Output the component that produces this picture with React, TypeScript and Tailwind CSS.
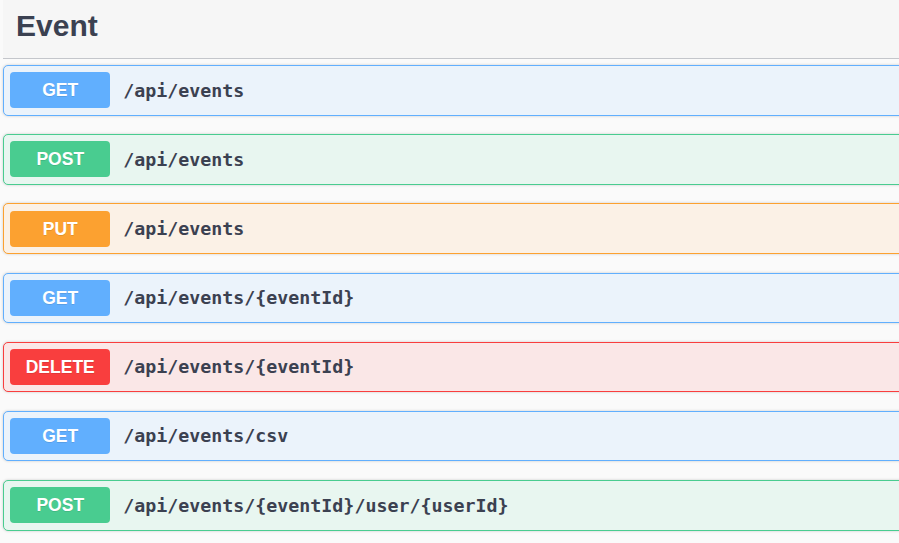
import React from "react";

type Op = { method: "GET" | "POST" | "PUT" | "DELETE"; path: string };

const ops: Op[] = [
  { method: "GET", path: "/api/events" },
  { method: "POST", path: "/api/events" },
  { method: "PUT", path: "/api/events" },
  { method: "GET", path: "/api/events/{eventId}" },
  { method: "DELETE", path: "/api/events/{eventId}" },
  { method: "GET", path: "/api/events/csv" },
  { method: "POST", path: "/api/events/{eventId}/user/{userId}" },
];

const styles: Record<Op["method"], { row: string; badge: string }> = {
  GET: { row: "bg-[#ebf3fb] border-[#61affe]", badge: "bg-[#61affe]" },
  POST: { row: "bg-[#e8f6f0] border-[#49cc90]", badge: "bg-[#49cc90]" },
  PUT: { row: "bg-[#fbf1e6] border-[#fca130]", badge: "bg-[#fca130]" },
  DELETE: { row: "bg-[#fae7e7] border-[#f93e3e]", badge: "bg-[#f93e3e]" },
};

export default function App() {
  return (
    <div className="w-[899px] h-[543px] overflow-hidden bg-[#fafafa]">
      <div className="ml-[3px] w-[940px]">
        <div className="bg-[#f6f6f6] border-b border-[#c4c6cb] pl-[13px] pt-[11px] pb-[17px]">
          <h2
            className="text-[30px] leading-[30px] font-bold text-[#3b4151]"
            style={{ fontFamily: '"Liberation Sans", Arial, sans-serif' }}
          >
            Event
          </h2>
        </div>
        <div className="mt-[6px] flex flex-col gap-[18.7px]">
          {ops.map((op, i) => (
            <div
              key={i}
              className={`flex items-center border rounded-[5px] p-[6.25px] shadow-[0_0_3px_rgba(0,0,0,0.19)] ${styles[op.method].row}`}
            >
              <div
                className={`w-[100px] h-[36px] rounded-[4px] flex items-center justify-center text-white font-bold text-[17.5px] [text-shadow:0_1px_0_rgba(0,0,0,0.1)] ${styles[op.method].badge}`}
                style={{ fontFamily: '"Liberation Sans", Arial, sans-serif' }}
              >
                {op.method}
              </div>
              <div
                className="pl-[13px] text-[18.3px] font-bold text-[#3b4151]"
                style={{ fontFamily: '"DejaVu Sans Mono", monospace' }}
              >
                {op.path}
              </div>
            </div>
          ))}
        </div>
      </div>
    </div>
  );
}
